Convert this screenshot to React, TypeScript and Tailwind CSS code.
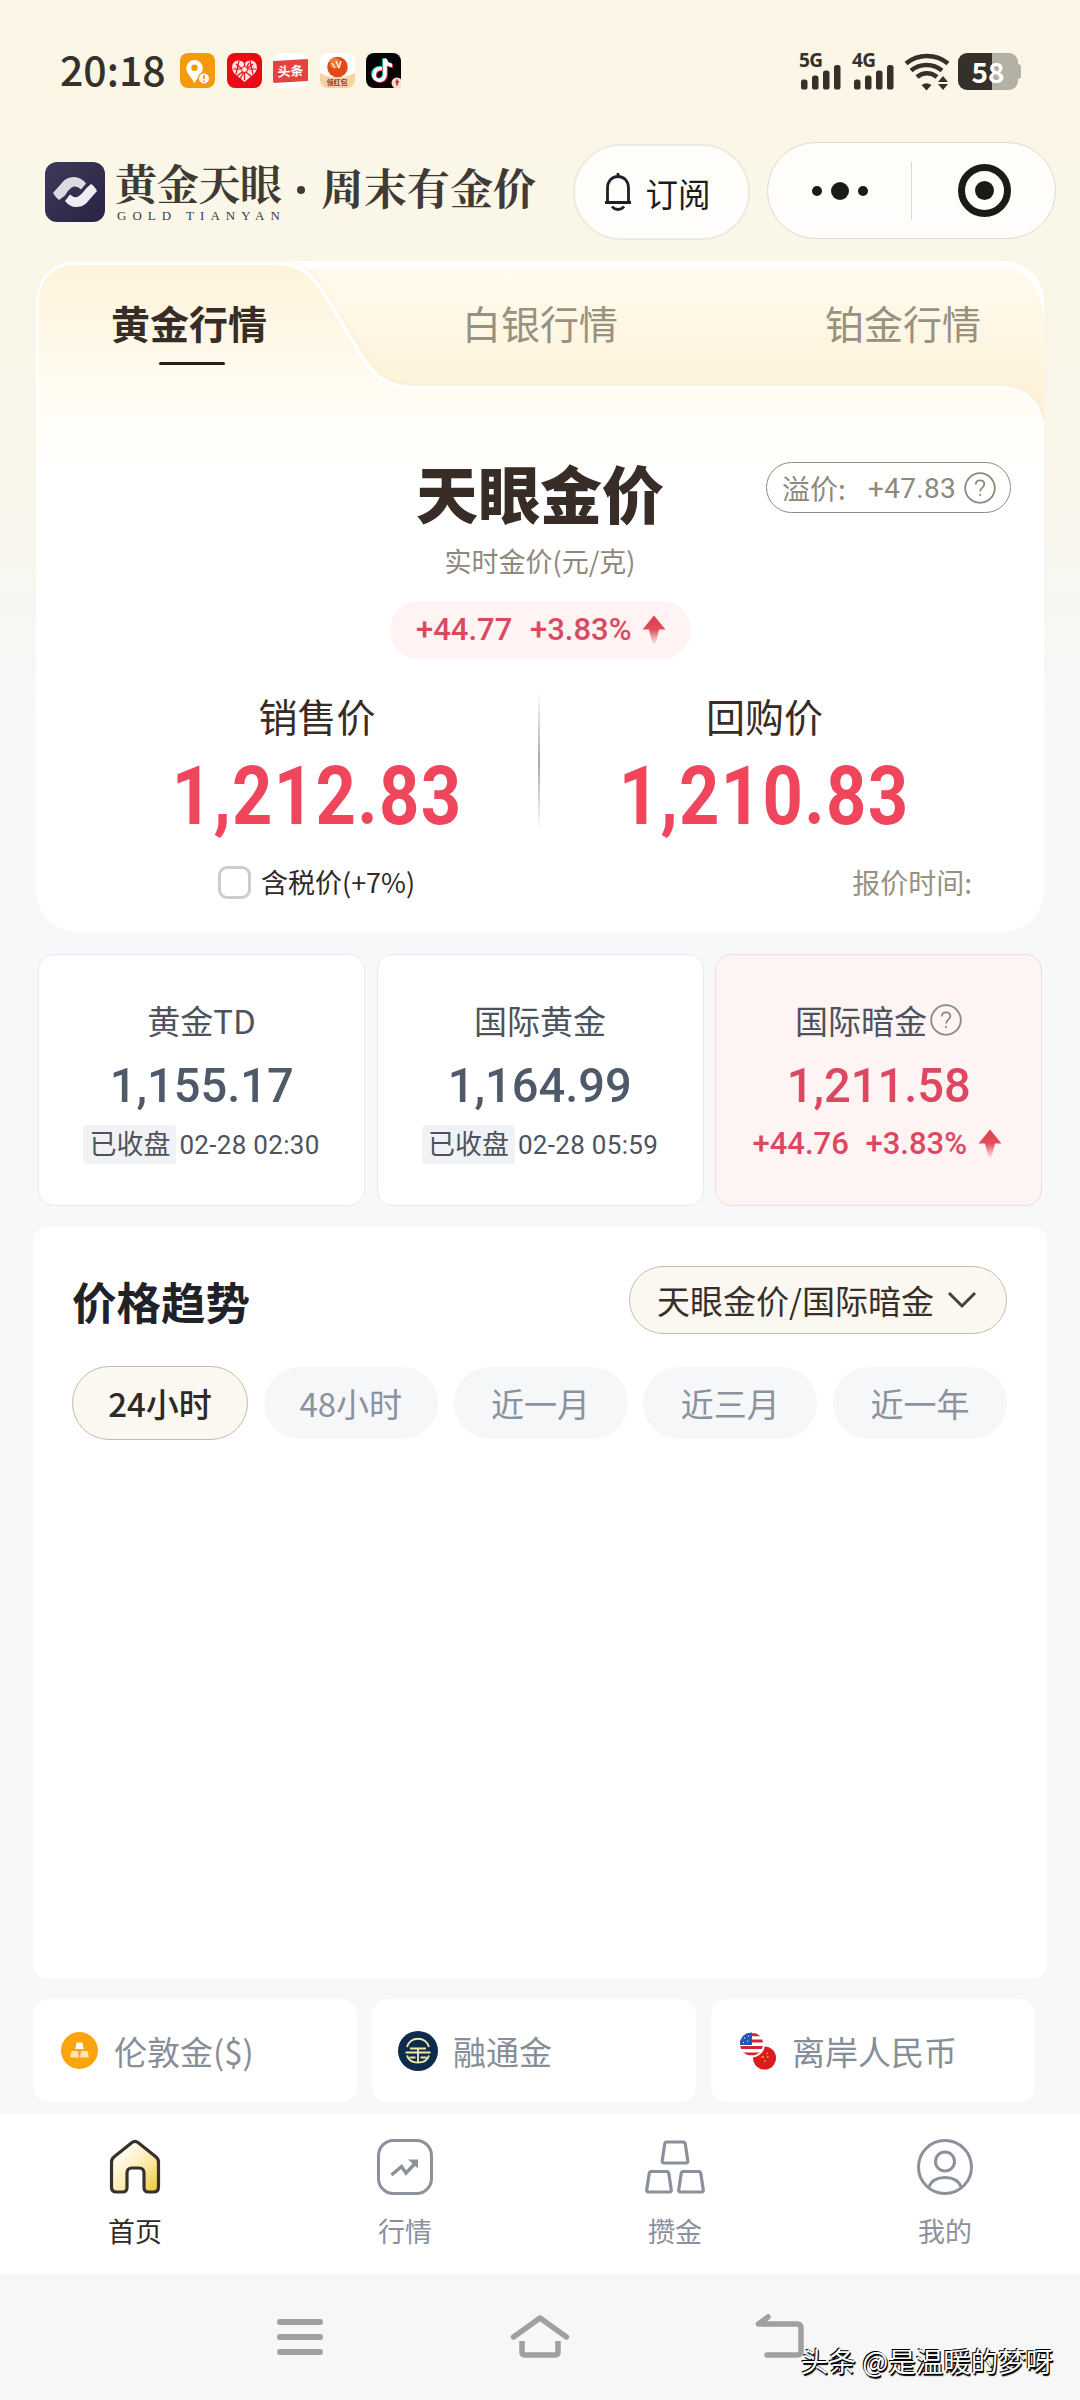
import type { ReactNode } from 'react';

const quotes = [
  { name: '黄金TD', price: '1,155.17', time: '02-28 02:30' },
  { name: '国际黄金', price: '1,164.99', time: '02-28 05:59' },
];

const ranges = ['48小时', '近一月', '近三月', '近一年'];

// figures are set in Roboto, narrowed where a DIN look is needed
function Num({ children, className = '' }: { children: ReactNode; className?: string }) {
  return (
    <span className={`inline-block whitespace-nowrap font-[Roboto,sans-serif] ${className}`}>
      {children}
    </span>
  );
}

function Help({ size, color }: { size: number; color: string }) {
  return (
    <svg width={size} height={size} viewBox="0 0 32 32" fill="none" stroke={color} className="shrink-0">
      <circle cx="16" cy="16" r="14.8" strokeWidth="1.8" />
      <path d="M11.8 12.6c0-2.6 1.8-4.2 4.3-4.2s4.2 1.6 4.2 3.8c0 3.2-4.2 3.6-4.2 7.2" strokeWidth="1.8" />
      <circle cx="16.1" cy="23" r="0.8" fill={color} strokeWidth="0.8" />
    </svg>
  );
}

function UpArrow() {
  return (
    <svg width="24" height="30" viewBox="0 0 24 30" className="shrink-0">
      <defs>
        <linearGradient id="up" x1="0" y1="0" x2="0" y2="1">
          <stop offset="0" stopColor="#df3a48" />
          <stop offset="0.5" stopColor="#e2505d" />
          <stop offset="1" stopColor="#e2505d" stopOpacity="0.05" />
        </linearGradient>
      </defs>
      <path d="M12 0.5 23.5 14.5H17L13.4 29h-2.8L7 14.5H0.5z" fill="url(#up)" />
    </svg>
  );
}

function Signal({ label }: { label: string }) {
  return (
    <div className="relative w-[43px] h-9">
      <span className="absolute left-[-2px] top-[-1px] text-[19px] leading-[17px] tracking-[-0.5px] font-bold font-['Noto_Sans',sans-serif]">
        {label}
      </span>
      <svg width="43" height="37" viewBox="0 0 43 37" fill="#35312a" className="absolute left-0 top-0">
        <rect x="0" y="26.5" width="6.5" height="10" rx="2.6" />
        <rect x="11" y="22.5" width="6.5" height="14" rx="2.6" />
        <rect x="22" y="17.5" width="6.5" height="19" rx="2.6" />
        <rect x="33" y="12" width="6.5" height="24.5" rx="2.6" />
      </svg>
    </div>
  );
}

function StatusBar() {
  return (
    <div className="h-[142px] pt-[53px] pl-[60px] pr-[59px] flex items-start text-[#35312a]">
      <span className="w-[120px] mt-[-2px] text-[41px] leading-[34px] font-medium">20:18</span>
      <div className="flex gap-[11.5px]">
        <svg width="35" height="35" viewBox="0 0 35 35">
          <rect width="35" height="35" rx="8" fill="#f59a0c" />
          <path d="M14.5 7a8.3 8.3 0 0 0-8.3 8.3c0 5 5.3 9 8.3 15 3-6 8.3-10 8.3-15A8.3 8.3 0 0 0 14.5 7z" fill="#fff" />
          <circle cx="14.5" cy="14.8" r="3.2" fill="#f59a0c" />
          <circle cx="24" cy="25.5" r="5.6" fill="#fff" stroke="#f59a0c" strokeWidth="1.2" />
          <path d="M24 22v4M24 27.6v1.4" stroke="#f59a0c" strokeWidth="1.8" />
        </svg>
        <svg width="35" height="35" viewBox="0 0 35 35">
          <rect width="35" height="35" rx="8" fill="#ea0a14" />
          <path d="M17.5 29 7.5 20.5C2.5 14.5 6 7.5 11 7.5c3 0 5 1 6.5 3C19 8.5 21 7.5 24 7.5c5 0 8.5 7 3.5 13z" fill="#fbe3e1" />
          <path d="M9 11l16 13M26 11 10 23M17.5 10v17M6 16h23M12 8l-3 13M23 8l3 13M13 26l9-16" stroke="#ea0a14" strokeWidth="1.2" fill="none" />
          <circle cx="17.5" cy="16.5" r="3" fill="#fbe3e1" stroke="#ea0a14" />
        </svg>
        <div className="w-[35px] h-[35px] rounded-[8px] bg-white flex items-center overflow-hidden">
          <div className="w-full h-[22px] bg-[#e4433f] -skew-y-3 text-white text-[13px] leading-[21px] font-bold text-center">
            头条
          </div>
        </div>
        <div className="w-[35px] h-[35px] rounded-[8px] bg-white overflow-hidden flex flex-col items-center">
          <svg width="35" height="25" viewBox="0 0 35 25" className="shrink-0">
            <path d="M0 20q17 9 35 0v5H0z" fill="#f6d2a4" />
            <circle cx="17.5" cy="14" r="10.3" fill="#e4471a" />
            <circle cx="15" cy="10" r="5.5" fill="#f07a2c" />
            <path d="M12 10l3 5M16 8l3 7M21 8l-2 7" stroke="#fff" strokeWidth="1.3" />
          </svg>
          <span className="w-full h-[10px] bg-[#f6d2a4] text-[7px] leading-[8px] font-bold text-center text-[#8a3d1c]">领红包</span>
        </div>
        <svg width="35" height="35" viewBox="0 0 35 35">
          <rect width="35" height="35" rx="8" fill="#050505" />
          <g fill="none" strokeWidth="3.6">
            <path d="M16 15.5c-5-.5-8 2.5-8 6.3 0 7.6 11 7.2 11-.6V6c.6 3.8 3.2 6 7 6.4" stroke="#28e0dc" transform="translate(-1 -.6)" />
            <path d="M16 15.5c-5-.5-8 2.5-8 6.3 0 7.6 11 7.2 11-.6V6c.6 3.8 3.2 6 7 6.4" stroke="#f0305a" transform="translate(1 .8)" />
            <path d="M16 15.5c-5-.5-8 2.5-8 6.3 0 7.6 11 7.2 11-.6V6c.6 3.8 3.2 6 7 6.4" stroke="#fff" />
          </g>
          <circle cx="31" cy="30" r="5.5" fill="#fbd9cc" />
          <path d="M31 26.5v6M29.5 29h3.5" stroke="#a83222" strokeWidth="1.5" />
        </svg>
      </div>
      <div className="ml-auto flex items-start">
        <Signal label="5G" />
        <div className="w-[10px]" />
        <Signal label="4G" />
        <svg width="46" height="38" viewBox="0 0 46 38" className="ml-[7px]" fill="none" stroke="#35312a">
          <path d="M2 10.5C14 .5 32 .5 44 10.5" strokeWidth="4.5" />
          <path d="M7 17.5c9-7.5 22-7.5 31 0" strokeWidth="4.5" />
          <path d="M13 24c6-5 14-5 20 0" strokeWidth="4.5" />
          <path d="M17.5 32q5-3.5 10 0l-5 5.5z" fill="#35312a" stroke="none" />
          <path d="M39 23l5 6H34zM39 37l5-6H34z" fill="#35312a" stroke="none" />
        </svg>
        <div className="ml-[8px] w-[60px] h-[37px] rounded-[9px] flex items-center justify-center text-white text-[28px] leading-[34px] pb-[2px] font-bold bg-[linear-gradient(90deg,#35312a_57%,#b3b1a4_57%)]">
          58
        </div>
        <div className="mt-[11px] w-[3px] h-[15px] rounded-r bg-[#b3b1a4]" />
      </div>
    </div>
  );
}

function Header() {
  return (
    <header className="h-[119px] pl-[45px] pr-[24px] flex items-start">
      <svg width="60" height="60" viewBox="0 0 60 60" className="mt-[20px] shrink-0">
        <defs>
          <linearGradient id="logo" x1="0" y1="0" x2="1" y2="1">
            <stop offset="0" stopColor="#3f3a5a" />
            <stop offset="1" stopColor="#282343" />
          </linearGradient>
        </defs>
        <rect width="60" height="60" rx="12" fill="url(#logo)" />
        <path d="M8 31 19 18.500q4-3.500 10-3.500 7 0 12 6.500l-5 6q-5-5-10-1.500-4 3-6 7.500l-6 4.500q-3-2-6-7z" fill="#dcdbe1" />
        <path d="M52 29 41 41.500q-4 3.500-10 3.500-6 0-11-6l5-6.500q5 4.500 9 1.500 4-3 7-7.500l5-4.500q3 1.500 6 7z" fill="#efeef2" />
      </svg>
      <div className="ml-[10px] mt-[15px] w-[170px] shrink-0 text-[#403a35]">
        <div className="text-[42px] leading-[50px] tracking-[-0.3px] font-bold whitespace-nowrap font-['Noto_Serif_CJK_SC','Noto_Sans_CJK_SC',serif]">
          黄金天眼
        </div>
        <div className="mt-[2px] text-[13px] leading-[14px] pl-[2px] tracking-[6px] whitespace-nowrap font-['Liberation_Serif',serif]">
          GOLD TIANYAN
        </div>
      </div>
      <span className="ml-[12px] mt-[44px] w-2 h-2 rounded-full bg-[#403a35] shrink-0" />
      <span className="ml-[16px] mt-[20px] w-[216px] shrink-0 whitespace-nowrap text-[43px] leading-[50px] font-bold text-[#403a35] font-['Noto_Serif_CJK_SC','Noto_Sans_CJK_SC',serif]">
        周末有金价
      </span>
      <button className="ml-auto mt-[2px] w-[177px] h-[96px] rounded-full bg-white/80 border-2 border-[#ecebe2] pr-[9px] flex items-center justify-center gap-[12px] text-[#1d1c1b]">
        <svg width="30" height="40" viewBox="0 0 30 40" fill="none" stroke="#1d2025" strokeWidth="2.8">
          <path d="M15 1v4M2 30.5h26M4.500 30V16c0-7 4.500-11.500 10.500-11.500S25.500 9 25.500 16v14" strokeLinejoin="round" />
          <path d="M9 34.500c3 4 9 4 12 0" />
        </svg>
        <span className="text-[32.500px] leading-[40px] mb-[-2px]">订阅</span>
      </button>
      <div className="ml-[17px] w-[289px] h-[97px] rounded-full bg-white/80 border border-[#dddccf] flex items-center">
        <div className="w-[143px] flex items-center justify-center gap-[9px]">
          <i className="w-[10px] h-[10px] rounded-full bg-[#1b1a17]" />
          <i className="w-[18px] h-[18px] rounded-full bg-[#1b1a17]" />
          <i className="w-[10px] h-[10px] rounded-full bg-[#1b1a17]" />
        </div>
        <div className="w-px h-[58px] bg-[#dad9d0]" />
        <div className="flex-1 pl-[2px] flex justify-center">
          <div className="w-[53px] h-[53px] rounded-full border-[7px] border-[#1b1a17] flex items-center justify-center">
            <i className="w-[19px] h-[19px] rounded-full bg-[#1b1a17]" />
          </div>
        </div>
      </div>
    </header>
  );
}

function PriceCard() {
  return (
    <section className="relative mx-[36px] h-[671px] rounded-[40px] overflow-hidden text-[#382c26]">
      {/* tab strip and the raised active tab */}
      <svg width="1009" height="671" viewBox="0 0 1009 671" className="absolute inset-0">
        <defs>
          <linearGradient id="strip" x1="0" y1="0" x2="0" y2="1">
            <stop offset="0" stopColor="#fffbef" />
            <stop offset="0.75" stopColor="#fef3da" />
            <stop offset="1" stopColor="#fdefcf" />
          </linearGradient>
          <linearGradient id="face" x1="0" y1="0" x2="0" y2="1">
            <stop offset="0" stopColor="#fef4dc" />
            <stop offset="0.1" stopColor="#fef7e5" />
            <stop offset="0.2" stopColor="#fffcf3" />
            <stop offset="0.32" stopColor="#ffffff" />
          </linearGradient>
          <filter id="soft" x="-5%" y="-5%" width="110%" height="110%">
            <feGaussianBlur stdDeviation="4" />
          </filter>
        </defs>
        <rect width="1009" height="175" fill="url(#strip)" />
        <path d="M240 0H969Q1009 0 1009 44L1008 60Q1003 7 965 7H240z" fill="#fff" />
        <path
          d="M0 671V42Q2 2 42 2H238C268 2 280 18 294 42L326 96C340 116 352 126.500 378 126.500H962Q1005 126.500 1009 172V671z"
          fill="#ecdcbd"
          opacity="0.5"
          filter="url(#soft)"
        />
        <path
          d="M1 680V42Q2 2 42 2H238C268 2 280 18 294 42L326 96C340 116 352 126.500 378 126.500H962Q1004 126.500 1008 172V680z"
          fill="url(#face)"
          stroke="#fff"
          strokeWidth="3.500"
        />
      </svg>

      <div className="relative">
        <div className="h-[124px] pl-[75px] pr-[63px] flex justify-between text-[39px] leading-[50px]">
          <div className="w-[158px] pt-[36px]">
            <div className="font-bold">黄金行情</div>
            <div className="mt-[15px] ml-[48px] w-[66px] h-[3px] rounded bg-[#221f1b]" />
          </div>
          <div className="pt-[36px] pr-[14px] text-[#99907f]">白银行情</div>
          <div className="pt-[36px] text-[#99907f]">铂金行情</div>
        </div>

        <div className="mt-[72px] h-[74px] grid grid-cols-[1fr_auto_1fr] items-start">
          <div />
          <h1 className="mt-[-1px] text-[62px] leading-[72px] font-black">天眼金价</h1>
          <div className="ml-auto mr-[33px] mt-[5px] w-[245px] h-[51px] rounded-full border-[1.500px] border-[#8f8a82] pl-[15px] pr-[14px] flex items-center text-[28px] leading-[40px] text-[#8f887b] whitespace-nowrap">
            <span>溢价:</span>
            <Num className="ml-auto mt-[3px] text-[28px] leading-[40px] tracking-[0.300px]">+47.83</Num>
            <span className="w-[8px]" />
            <Help size={32} color="#8f887b" />
          </div>
        </div>
        <div className="mt-[12px] text-center text-[27px] leading-[36px] text-[#8f887b]">实时金价(元/克)</div>

        <div className="mt-[22px] mx-auto w-[301px] h-[58px] rounded-full bg-[#fff3f3] pl-[2px] flex items-center justify-center text-[31px] font-medium text-[#d94a60]">
          <Num className="w-[114px]">+44.77</Num>
          <Num className="w-[112px]">+3.83%</Num>
          <UpArrow />
        </div>

        <div className="mt-[32px] flex text-center">
          <div className="w-[502px] pl-[60px]">
            <div className="text-[39px] leading-[48px]">销售价</div>
            <Num className="mt-[3px] text-[81px] leading-[110px] font-bold text-[#f0465c] tracking-[1.500px] scale-x-[0.87] -mx-6">1,212.83</Num>
          </div>
          <div className="w-[2px] h-[140px] bg-linear-to-b from-transparent via-[#aaa8a4] to-transparent" />
          <div className="flex-1 pr-[55px]">
            <div className="text-[39px] leading-[48px]">回购价</div>
            <Num className="mt-[3px] text-[81px] leading-[110px] font-bold text-[#f0465c] tracking-[1.500px] scale-x-[0.87] -mx-6">1,210.83</Num>
          </div>
        </div>

        <div className="mt-[10px] pl-[182px] pr-[72px] flex items-center text-[27px] leading-[40px]">
          <span className="w-[33px] h-[33px] rounded-[9px] border-[3px] border-[#cbcdcf] bg-white" />
          <span className="ml-[10px] text-[#2e2a27]">含税价(+7%)</span>
          <span className="ml-auto text-[28px] text-[#99907f]">报价时间:</span>
        </div>
      </div>
    </section>
  );
}

function QuoteCards() {
  return (
    <section className="mt-[22px] mx-[38px] h-[252px] grid grid-cols-[327px_327px_327px] gap-[11.500px] text-center">
      {quotes.map((q) => (
        <div key={q.name} className="rounded-[16px] bg-white border border-[#e8eaed] pt-[43px] text-[#4d535d]">
          <div className="text-[33px] leading-[44px]">{q.name}</div>
          <Num className="mt-[4px] text-[49px] leading-[80px] font-medium text-[#4e5969] scale-x-[0.96]">{q.price}</Num>
          <div className="mt-[-1px] flex items-center justify-center gap-[3px]">
            <span className="w-[93px] h-[39px] rounded bg-[#f1f2f5] text-[27px] leading-[36px]">已收盘</span>
            <Num className="text-[26px] leading-[38px] tracking-[0.300px]">{q.time}</Num>
          </div>
        </div>
      ))}
      <div className="rounded-[16px] bg-[#fff4f4] border border-[#f0dcdf] pt-[43px] text-[#dc4860]">
        <div className="flex items-center justify-center gap-[3px] text-[33px] leading-[44px] text-[#4d535d]">
          国际暗金
          <Help size={32} color="#86898f" />
        </div>
        <Num className="mt-[4px] text-[49px] leading-[80px] font-medium scale-x-[0.96]">1,211.58</Num>
        <div className="mt-[-1px] h-[38px] pr-[3px] flex items-center justify-center text-[31px] font-medium text-left">
          <Num className="w-[113px]">+44.76</Num>
          <Num className="w-[112px]">+3.83%</Num>
          <UpArrow />
        </div>
      </div>
    </section>
  );
}

function TrendPanel() {
  return (
    <section className="mt-[21px] mx-[33px] h-[751px] rounded-[14px] bg-white pl-[39px] pr-[40px] pt-[38px]">
      <div className="h-[70px] flex items-center justify-between">
        <h2 className="pt-[2px] text-[44.500px] leading-[60px] font-bold text-[#1f2229]">价格趋势</h2>
        <button className="w-[378px] h-[68px] rounded-full bg-[#fbf8f1] border-[1.500px] border-[#c5bdaa] pl-[27px] flex items-center text-[33px] leading-[40px] text-[#382f29] whitespace-nowrap">
          天眼金价/国际暗金
          <svg width="30" height="18" viewBox="0 0 30 18" fill="none" stroke="#45413d" strokeWidth="3" className="ml-[13px]">
            <path d="M2 2l13 13L28 2" />
          </svg>
        </button>
      </div>
      <div className="mt-[31px] flex items-center justify-between text-[33px] leading-[48px] text-[#8b929d]">
        <button className="w-[176px] h-[74px] rounded-full bg-[#fbf8f1] border-[1.500px] border-[#c5bdaa] text-[#2e2925] font-medium">
          24小时
        </button>
        {ranges.map((r) => (
          <button key={r} className="w-[174px] h-[72px] rounded-full bg-[#f6f7f9]">
            {r}
          </button>
        ))}
      </div>
    </section>
  );
}

function Markets() {
  return (
    <section className="mt-[21px] mx-[33px] h-[103px] flex gap-[15px] text-[33px] leading-[48px] text-[#868e98] whitespace-nowrap">
      <div className="w-[324px] rounded-[16px] bg-white pl-[28px] flex items-center">
        <svg width="37" height="37" viewBox="0 0 37 37">
          <circle cx="18.5" cy="18.5" r="18.5" fill="#fba50d" />
          <path d="M15.5 10.500h6l1.200 6.500h-8.400z" fill="#fff" />
          <path d="M10.500 19h6.500l1 6.500H9zM20 19h6.500l1.500 6.500h-9z" fill="#ffe3b0" />
        </svg>
        <span className="ml-[16px]">伦敦金($)</span>
      </div>
      <div className="w-[324px] rounded-[16px] bg-white pl-[26px] flex items-center">
        <svg width="40" height="40" viewBox="0 0 40 40">
          <circle cx="20" cy="20" r="20" fill="#0d2c4d" />
          <g fill="none" stroke="#f2e9a8" strokeWidth="1.9">
            <path d="M9 16C12 5 28 5 31 16M12 17.500h16M7.500 21.500h25M20 17.500V31.500M9 24.500c3 9.500 19 9.500 22 0M11.500 26.500h6M22.500 26.500h6" />
          </g>
        </svg>
        <span className="ml-[15px]">融通金</span>
      </div>
      <div className="w-[324px] rounded-[16px] bg-white pl-[28px] flex items-center">
        <svg width="38" height="38" viewBox="0 0 38 38">
          <clipPath id="us">
            <circle cx="12.500" cy="12" r="11.5" />
          </clipPath>
          <circle cx="25.500" cy="26" r="11.5" fill="#db1b1f" />
          <circle cx="12.500" cy="12" r="13.500" fill="#fff" />
          <g clipPath="url(#us)">
            <path d="M0 0h26v26H0z" fill="#fff" />
            <path d="M0 2.800h26M0 9h26M0 15.500h26M0 22h26" stroke="#cf2a32" strokeWidth="3" />
            <path d="M0 0h13v13H0z" fill="#2656b4" />
            <path d="M5 6h1M9 4h1M8 9h1M4 10.500h1" stroke="#fff" />
          </g>
          <path d="M22.500 25h2.500M27.500 21.500h1.500M28 25h1.500M25 29h1.500" stroke="#f7b733" strokeWidth="1.6" />
        </svg>
        <span className="ml-[15px]">离岸人民币</span>
      </div>
    </section>
  );
}

function TabBar() {
  return (
    <nav className="mt-[12px] h-[160px] bg-white grid grid-cols-4 text-center text-[27px] leading-[36px] text-[#8a919c]">
      <div className="pt-[25px] flex flex-col items-center text-[#2e2925]">
        <svg width="56" height="56" viewBox="0 0 56 56">
          <defs>
            <linearGradient id="home" x1="0.2" y1="0.2" x2="1" y2="1">
              <stop offset="0" stopColor="#fffdf5" />
              <stop offset="0.5" stopColor="#fbe9a8" />
              <stop offset="1" stopColor="#efc52c" />
            </linearGradient>
          </defs>
          <path
            d="M4.500 23c0-2.500 1-4 3-5.500L25 3.500q3-2.300 6 0l17.500 14c2 1.500 3 3 3 5.500v25q0 5-5 5h-5q-4.500 0-4.500-4.500V34q0-5-5-5h-7q-5 0-5 5v14.500q0 4.500-4.500 4.500h-6q-5 0-5-5z"
            fill="url(#home)"
            stroke="#38302b"
            strokeWidth="3.2"
          />
        </svg>
        <span className="mt-[18px]">首页</span>
      </div>
      <div className="pt-[25px] flex flex-col items-center">
        <svg width="56" height="56" viewBox="0 0 56 56" fill="none" stroke="#8a919b" strokeWidth="3">
          <rect x="1.5" y="1.5" width="53" height="53" rx="15" />
          <path d="M14.500 36 24.500 27.500l4.500 6.500L38 24.500" strokeWidth="3.4" />
          <path d="M31 20.500h10v9z" fill="#8a919b" stroke="none" />
        </svg>
        <span className="mt-[18px]">行情</span>
      </div>
      <div className="pt-[25px] flex flex-col items-center">
        <svg width="60" height="56" viewBox="0 0 60 56" fill="none" stroke="#8a919b" strokeWidth="3.2" strokeLinejoin="round">
          <path d="M22 3h16q2 0 2.300 2l2.500 17q.2 2-1.800 2H19q-2 0-1.800-2L19.700 5q.3-2 2.300-2z" />
          <path d="M6.500 32.500h15q2 0 2.300 2l2.500 16.500q.2 2-1.800 2H3.500q-2 0-1.800-2l2.500-16.500q.3-2 2.300-2z" />
          <path d="M38.500 32.500h15q2 0 2.300 2l2.500 16.500q.2 2-1.800 2h-21q-2 0-1.800-2l2.500-16.500q.3-2 2.300-2z" />
        </svg>
        <span className="mt-[18px]">攒金</span>
      </div>
      <div className="pt-[25px] flex flex-col items-center">
        <svg width="56" height="56" viewBox="0 0 56 56" fill="none" stroke="#8a919b" strokeWidth="3">
          <circle cx="28" cy="28" r="26.5" />
          <circle cx="28" cy="22.5" r="9.5" />
          <path d="M11.500 48.500C14 42 20 38.500 28 38.500s14 3.500 16.500 10" />
        </svg>
        <span className="mt-[18px]">我的</span>
      </div>
    </nav>
  );
}

function SystemBar() {
  return (
    <footer className="relative h-[125px] bg-[#f7f7f7] pt-[38px] pl-[270px] flex">
      <svg width="60" height="50" viewBox="0 0 60 50" fill="none" stroke="#a0a0a0" strokeWidth="6" strokeLinecap="round">
        <path d="M10 10h40M10 25h40M10 40h40" />
      </svg>
      <svg width="60" height="50" viewBox="0 0 60 50" fill="none" stroke="#a0a0a0" strokeWidth="5.5" className="ml-[180px]">
        <path d="M3.500 25 30 6l26.500 19" strokeLinecap="round" strokeLinejoin="round" />
        <path d="M12 29v11q0 3 3 3h30q3 0 3-3V29" />
      </svg>
      <svg width="60" height="50" viewBox="0 0 60 50" fill="none" stroke="#a0a0a0" strokeWidth="5.5" className="ml-[180px]" strokeLinecap="round" strokeLinejoin="round">
        <path d="M18 5 8.500 12H47q4 0 4 4v23q0 4-4 4H17" />
      </svg>
      <span className="absolute left-[801px] top-[68px] text-[27.500px] leading-[36px] text-white whitespace-nowrap [text-shadow:-1px_-1px_0_#000,1px_1px_0_#000,1px_2px_1px_#000]">
        头条 @是温暖的梦呀
      </span>
    </footer>
  );
}

export default function App() {
  return (
    <main className="w-[1080px] h-[2400px] overflow-hidden bg-[#f6f8fa] font-['Noto_Sans_CJK_SC',sans-serif] bg-[linear-gradient(180deg,#fcf5e5_0px,#faf7e9_220px,#f9f6e9_460px,#f6f8fa_740px)]">
      <StatusBar />
      <Header />
      <PriceCard />
      <QuoteCards />
      <TrendPanel />
      <Markets />
      <TabBar />
      <SystemBar />
    </main>
  );
}
